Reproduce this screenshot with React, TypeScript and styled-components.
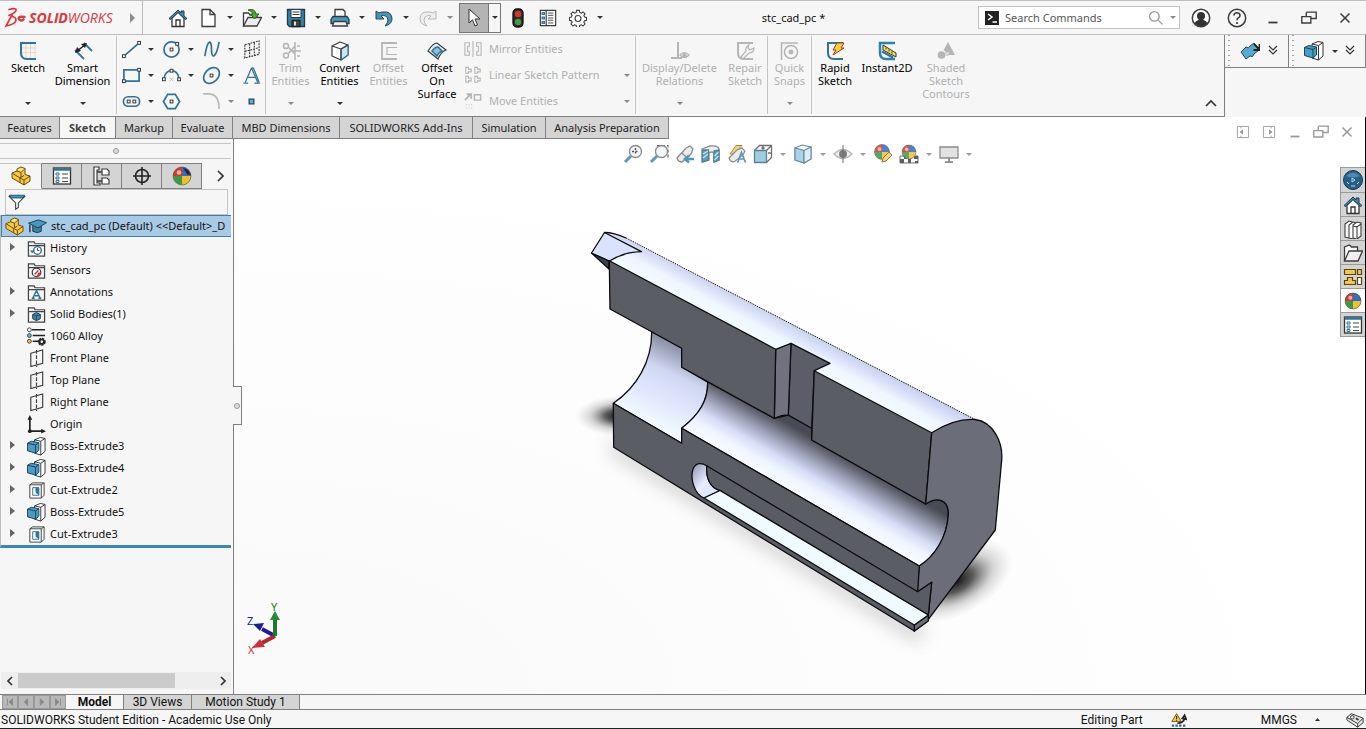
import React from "react";
import styled, { createGlobalStyle, css } from "styled-components";

const Global = createGlobalStyle`
  *, *::before, *::after { box-sizing: border-box; }
  html, body { margin: 0; padding: 0; }
  body { background: #f6f6f6; color: #111; font: 11px/16px "Noto Sans", "Open Sans", sans-serif; overflow: hidden; }
  button, input { font: inherit; color: inherit; margin: 0; }
  button { background: none; border: 0; padding: 0; }
  ul { list-style: none; margin: 0; padding: 0; }
  svg { display: block; flex: none; }
`;

/* ---------- icon primitives ---------- */

const Glyph = styled.svg.attrs({ viewBox: "0 0 20 20", "aria-hidden": true })<{ $size?: number }>`
  width: ${(p) => p.$size ?? 20}px;
  height: ${(p) => p.$size ?? 20}px;
  fill: none;
  stroke: #3c3c3c;
  stroke-width: 1.3;
`;

const BLUE = "#2f7396";
const PALE = "#b5b5b5";

const Node = ({ x, y, c = "#333" }: { x: number; y: number; c?: string }) => (
  <rect x={x - 1.5} y={y - 1.5} width="3" height="3" fill="#fff" stroke={c} strokeWidth="1" />
);

const CubeIcon = () => (
  <g strokeWidth="1" strokeLinejoin="round">
    <path d="M8 3l6-2.500 5 1v13.500l-4.500 4L8 17z" fill="#fff" stroke="#333" />
    <path d="M14.500 4.500l4.500-3M14.500 4.500V19M8 3l6.500 1.500" stroke="#333" />
    <path d="M.5 6.500l4-2 8 1.500v8L9 17 .5 14.500z" fill="#4a9cc4" stroke="#17455f" />
    <path d="M.5 6.500L9 8.500 12.500 6M9 8.500V17" stroke="#17455f" />
  </g>
);

const Folder = () => (
  <path d="M1.500 18v-15h6l1 2h10v13zM1.500 7h17" fill="#f4f4f4" stroke="#444" strokeWidth="1.300" />
);

const Ball = ({ cx = 10, cy = 10, r = 8 }: { cx?: number; cy?: number; r?: number }) => (
  <g stroke="none">
    <circle cx={cx} cy={cy} r={r} fill="#3c9a46" />
    <path d={`M${cx} ${cy}V${cy - r}A${r} ${r} 0 0 1 ${cx + r} ${cy}z`} fill="#2f6fc0" />
    <path d={`M${cx} ${cy}H${cx - r}A${r} ${r} 0 0 1 ${cx} ${cy - r}z`} fill="#d8372f" />
    <path d={`M${cx} ${cy}H${cx + r}A${r} ${r} 0 0 1 ${cx} ${cy + r}z`} fill="#f0c02c" />
    <circle cx={cx - r / 3} cy={cy - r / 2.5} r={r / 4} fill="#fff" opacity=".65" />
    <circle cx={cx} cy={cy} r={r} fill="none" stroke="#444" strokeOpacity=".6" strokeWidth=".8" />
  </g>
);

const Part = () => (
  <g stroke="#6b4b06" strokeWidth="1" strokeLinejoin="round">
    <path d="M1 7l5-2V3l4-2 4 1.500v6l5 1.500v5l-6 4L1 12z" fill="#f6c945" />
    <path d="M1 7l8 5v4.500M9 12l4-2.500M6 5l4 1.500 4-4M10 6.500v4.500M13 14v5M13 14l6-4M9 12l4 2" />
    <path d="M6.500 3.500L10 2l3 1-3 2.500z" fill="#fde592" stroke="none" />
  </g>
);

const House = () => (
  <g>
    <path d="M4 10v8.500h12V10l-6-6z" fill="#fff" stroke="#333" />
    <path d="M8 18v-6h4v6" stroke="#333" />
    <path d="M1 10.500L10 2l3 3V3h3v5l3 2.500-1.500 1L10 4.500l-7.500 7z" fill="#4189ab" stroke="#173f55" strokeWidth="1" />
  </g>
);

const ListBox = () => (
  <g>
    <rect x="1.500" y="2" width="17" height="16" fill="#fff" stroke="#333" />
    <path d="M1.500 3.500h17" stroke={BLUE} strokeWidth="2.500" />
    <path d="M10 8h6M10 12h6M10 15.500h6" stroke="#444" strokeWidth="1" />
    <path d="M4 7h3v2H4zM4 11h3v2H4zM4 14.500h3v2H4z" stroke={BLUE} strokeWidth="1" />
  </g>
);

const Magnifier = () => (
  <g>
    <path d="M8 12l-6 6" stroke="#4489a8" strokeWidth="3" />
    <circle cx="12.500" cy="7.500" r="6" fill="#f2f5f7" stroke="#777" />
  </g>
);

const SketchL = ({ c = BLUE }: { c?: string }) => (
  <path d="M18 2H3v10q0 6 6 6h9" stroke={c} strokeWidth="2" />
);

const icons = {
  home: <House />,
  page: <path d="M4 1.500h8l5 5v12H4zM12 1.500v5h5" fill="#fff" />,
  open: (
    <g>
      <path d="M1.500 18V5h5l1.500 2h7v3" fill="#fff" />
      <path d="M1.500 18L6 9.500h13.500L15 18z" fill="#eee" />
      <path d="M6 2q7-2 8 4h3l-4.500 5L8.500 6H11q-1-3-5-4z" fill="#4da52c" stroke="#28691a" strokeWidth="1" />
    </g>
  ),
  save: (
    <g>
      <path d="M1.500 1.500h17v17h-15l-2-2z" fill="#3a7fa2" stroke="#1f3c4c" />
      <path d="M5 1.500h10v8H5z" fill="#fff" stroke="#1f3c4c" strokeWidth="1" />
      <path d="M6.500 4h7M6.500 6.500h7" strokeWidth="1" />
      <path d="M6 12.500h8v6H6z" fill="#444" stroke="#222" />
      <path d="M8 13.500h2v4H8z" fill="#ddd" stroke="none" />
    </g>
  ),
  print: (
    <g>
      <path d="M5 9V1.500h8l2 2V9" fill="#fff" />
      <path d="M3 8.500h14l2 3v4H1v-4z" fill="#4b97bb" stroke="#1f3c4c" />
      <path d="M4 13.500h12l1.500 4.500h-15z" fill="#eee" />
    </g>
  ),
  undo: <path d="M2 3v8h8l-3-3q6-2 7 4 0 3-3 6 7-2 7-7 0-8-9-7-2 0-4 1z" fill="#4a94b8" stroke="#1d4a63" strokeWidth="1" />,
  redo: <path d="M18 3v8h-8l3-3q-6-2-7 4 0 3 3 6-7-2-7-7 0-8 9-7 2 0 4 1z" fill="#eee" stroke="#b8b8b8" strokeWidth="1" />,
  cursor: <path d="M5 1v14l3.500-3.200L11 18l2.500-1-2.500-6h5z" fill="#fff" stroke="#333" strokeWidth="1" />,
  light: (
    <g>
      <rect x="5" y="1" width="10" height="18" rx="4" fill="#2c2c2c" stroke="#111" />
      <circle cx="10" cy="6" r="3.200" fill="#d7362b" stroke="none" />
      <circle cx="10" cy="14" r="3.200" fill="#469a48" stroke="none" />
    </g>
  ),
  options: (
    <g>
      <path d="M1.500 1.500h17v17h-17zM8 1.500v17" fill="#fff" />
      <path d="M3.500 4h2.500v2H3.500zM3.500 9h2.500v2H3.500zM3.500 14h2.500v2H3.500z" stroke={BLUE} />
      <path d="M10 4.500h6M10 7h6M10 10h6M10 12.500h6M10 15.500h6" strokeWidth="1" />
    </g>
  ),
  gear: (
    <g strokeWidth="1.200">
      <path d="M8.500 1.500h3l.5 2.300 1.700.8 2-1.300 2.100 2.100-1.300 2 .8 1.600 2.200.5v3l-2.200.5-.8 1.700 1.300 2-2.100 2.100-2-1.300-1.700.8-.5 2.200h-3L8 18.300l-1.700-.8-2 1.300-2.100-2.100 1.300-2-.8-1.700L.5 12.500v-3L2.700 9l.8-1.600-1.300-2 2.100-2.100 2 1.300L8 3.800z" fill="#fff" />
      <circle cx="10" cy="10.500" r="3.300" />
    </g>
  ),
  user: (
    <g>
      <circle cx="10" cy="10" r="8.700" fill="#fff" strokeWidth="1.500" />
      <circle cx="10" cy="8" r="4" fill="#333" stroke="none" />
      <path d="M3.500 15.500q1-3 4-3.500l1-2h3l1 2q3 .5 4 3.500-6 5.500-13 0z" fill="#333" stroke="none" />
    </g>
  ),
  help: (
    <g>
      <circle cx="10" cy="10" r="8.700" strokeWidth="1.500" />
      <path d="M7 7.500q0-2.700 3-2.700t3 2.700q0 1.500-1.700 2.400-1.300.8-1.300 2.300" strokeWidth="1.600" />
      <circle cx="10" cy="15" r="1.100" fill="#333" stroke="none" />
    </g>
  ),
  minimize: <path d="M5 15h10" strokeWidth="2" />,
  restore: <path d="M7 3.500h11v7h-6M2 8.500h10v7H2zM7 3.500v5" strokeWidth="1.500" />,
  close: <path d="M5 5l10 10M15 5L5 15" strokeWidth="1.700" />,
  search: <path d="M13 13l5 5M14 8a6 6 0 1 1-12 0 6 6 0 0 1 12 0z" stroke="#999" strokeWidth="1.600" />,
  sketch: (
    <g>
      <path d="M8 3v14M12.500 3v14M17 3v14M4 7h14M4 11.500h14" stroke="#e0cdbd" strokeWidth=".7" />
      <SketchL />
    </g>
  ),
  smart: (
    <g>
      <path d="M2 9l9 9M11 2l8 8" stroke={BLUE} strokeWidth="1.800" />
      <path d="M3.500 10.500l9-7" stroke="#222" strokeWidth="1.500" />
      <path d="M2 12l2-6 4 4zM14 2l-6 1 4 4z" fill="#222" stroke="none" />
    </g>
  ),
  line: <g><path d="M2 17L18 3" stroke={BLUE} strokeWidth="1.800" /><Node x={2} y={17} /><Node x={18} y={3} /></g>,
  circle: <g><circle cx="10" cy="10" r="8" stroke={BLUE} strokeWidth="1.800" /><Node x={10} y={10} /><Node x={16} y={4} /></g>,
  spline: <path d="M3 17C6-2 10-1 10 10s5 9 8-8" stroke={BLUE} strokeWidth="1.800" />,
  plane: <path d="M3 5l15-4v14L3 19zM3 12l15-4M8 4v14M13 3v13" strokeDasharray="2 1" strokeWidth="1.200" />,
  rect: <g><path d="M2 4h16v12H2z" stroke={BLUE} strokeWidth="1.800" /><Node x={18} y={4} /><Node x={2} y={16} /></g>,
  arc: <g><path d="M2 14Q3 5 10 5t8 9" stroke={BLUE} strokeWidth="1.800" /><Node x={2} y={14} /><Node x={10} y={5} /><Node x={18} y={14} /><path d="M8 12l4 4M12 12l-4 4" stroke="#aaa" strokeWidth=".7" /></g>,
  ellipse: <g><ellipse cx="10" cy="10" rx="9.500" ry="7" transform="rotate(-45 10 10)" stroke={BLUE} strokeWidth="1.800" /><Node x={10} y={10} /></g>,
  text: <path d="M10 2L3.500 17M10 2l6.500 15M12 2L18 17M6 12h8M1.500 18h5M13 18h6M10 2h2" stroke={BLUE} />,
  slot: <g><rect x="1.500" y="5" width="17" height="10" rx="5" stroke={BLUE} strokeWidth="1.800" /><Node x={7} y={10} /><Node x={13} y={10} /></g>,
  polygon: <g><path d="M6 2.500h8l4.500 7.500-4.500 7.500H6L1.500 10z" stroke={BLUE} strokeWidth="1.800" /><Node x={10} y={10} /></g>,
  fillet: <path d="M1 2h6q11 0 11 16" stroke="#b9b9b9" strokeWidth="1.800" />,
  point: <rect x="7.500" y="7.500" width="5" height="5" fill="#5aafd8" stroke="#1d4a63" />,
  trim: (
    <g stroke={PALE} strokeWidth="1.500">
      <circle cx="5" cy="5" r="2.500" /><circle cx="5" cy="14.500" r="2.500" />
      <path d="M7 6l7 7M7 13l7-8M14 1v18M9 10h11M16 5h3M16 15h3" />
    </g>
  ),
  convert: (
    <g strokeWidth="1.200" strokeLinejoin="round">
      <path d="M2 5l8-4 8 3v10l-7 5-9-4z" fill="#fff" />
      <path d="M11 8l7-4v10l-7 5z" fill="#cfe3ee" stroke={BLUE} />
      <path d="M2 5l9 3v11M11 8l7-4" />
    </g>
  ),
  offset: <g stroke={PALE} strokeWidth="1.800"><path d="M18 2H3v16h15" /><path d="M18 6.500H8v7h10" strokeWidth="1.200" /></g>,
  surface: (
    <g strokeWidth="1.200">
      <path d="M1 10Q6 2 10 2l9 7q-5 2-8 9z" fill="#e2eef4" />
      <path d="M5 10q3-4 6-4l4 4q-3 1-5 5z" fill="#8fc0d8" stroke={BLUE} strokeWidth="1.500" />
    </g>
  ),
  mirror: <path d="M10 1v18M1 3h5v4H4v6h2v4H1zM19 3h-5v4h2v6h-2v4h5z" stroke={PALE} strokeWidth="1.200" />,
  pattern: (
    <path d="M2 1.500h3v2h3v3H5v1.500H2zM12 1.500h3v2h3v3h-3v1.500h-3zM2 11.500h3v2h3v3H5v1.500H2zM12 11.500h3v2h3v3h-3v1.500h-3z" stroke={PALE} strokeWidth="1.200" />
  ),
  move: <g stroke={PALE}><path d="M1 9l6-6M3 2.500h5v5" strokeWidth="2" /><path d="M11.500 3h7v6h-7z" strokeWidth="1.500" /><path d="M2 14h7M2 18h7" strokeDasharray="1 2" strokeWidth="1" /></g>,
  relations: <g stroke={PALE}><path d="M8 1v16M1 17h11" strokeWidth="2" /><path d="M10 14q4.500-5 9 0-4.500 5-9 0z" fill="#f6f6f6" strokeWidth="1.200" /><circle cx="14.500" cy="14" r="1.600" fill={PALE} /></g>,
  repair: <g stroke={PALE}><SketchL c={PALE} /><path d="M6 16l5-6q-1-4 3-6l-1 3 2 2 4-2q0 5-5 5l-6 6z" fill="#f6f6f6" strokeWidth="1.200" /></g>,
  snaps: <g stroke={PALE}><path d="M1.500 19V2H18" strokeWidth="1.500" /><circle cx="11" cy="11" r="6.500" strokeWidth="1.500" /><circle cx="11" cy="11" r="1.800" fill={PALE} /></g>,
  rapid: <g><SketchL /><path d="M12 2h7l-3 5h3L8 14l3-5H8z" fill="#f7d23e" stroke="#a63a1d" strokeWidth="1" /></g>,
  instant: (
    <g>
      <path d="M18 2H3v10q0 6 6 6h9" stroke="#2d80b0" strokeWidth="2.500" />
      <path d="M6 4l13 8v4L6 9z" fill="#f2e24a" stroke="#333" strokeWidth="1" />
      <path d="M9 6.500v2M12 8.500v2M15 10.500v2" strokeWidth="1" />
      <path d="M5 10.500l11 6" stroke={BLUE} strokeWidth="2" />
    </g>
  ),
  shaded: <g stroke="none" fill={PALE}><path d="M12 1l7 13H5z" /><circle cx="5.500" cy="14" r="4.500" stroke="#f6f6f6" /><path d="M9 11h4v4H9z" fill="#d4d4d4" /></g>,
  surfaceTool: (
    <g>
      <path d="M1 11l5-5q3 2 4-1l4-3 5 7-5 4q-1 4-4 2l-4 3z" fill="#56a9cf" stroke="#1d4a63" strokeWidth="1" />
      <path d="M14 3l5 5M19.500 3v6h-6" stroke="#222" strokeWidth="1.800" />
    </g>
  ),
  cube: <CubeIcon />,
  part: <Part />,
  list: <ListBox />,
  config: (
    <g>
      <path d="M2 1h5v3H5v13h3v2H2z" fill="#fff" strokeWidth="1.200" />
      <path d="M5 6h5M5 15h5" />
      <path d="M10 3h5l2 2v4h-7zM10 12h5l2 2v4h-7z" fill="#fff" strokeWidth="1.200" />
    </g>
  ),
  target: <g stroke="#222"><circle cx="10" cy="10" r="6.500" strokeWidth="1.600" /><path d="M10 1v18M1 10h18" strokeWidth="1.600" /></g>,
  ball: <Ball />,
  ballTab: <g><Ball r={9} /><path d="M11 2q6 1 7.500 7l-3-.5z" fill="#3a1c1c" stroke="none" /></g>,
  filter: (
    <g>
      <path d="M1.500 4l7 7v7l3-2v-5l7-7z" fill="#fff" strokeWidth="1.200" />
      <path d="M1.500 2.500h17l-2 3h-13z" fill="#4b97bb" stroke="#1d4a63" strokeWidth="1" />
    </g>
  ),
  cap: (
    <g stroke="#173f55" strokeWidth="1">
      <path d="M5 9v6q5 3 9 0V9" fill="#3c7fa1" />
      <path d="M.5 6.500L11 3l8.500 3-9 5.500z" fill="#4b97bb" />
      <path d="M2 8v8" stroke="#333" strokeWidth="1.500" />
    </g>
  ),
  history: <g><Folder /><circle cx="11" cy="12" r="4" fill="#fff" stroke={BLUE} strokeWidth="1.500" /><path d="M11 9.500V12h2" strokeWidth="1" /><path d="M3 12h5l-2.500 3z" fill={BLUE} stroke="none" /></g>,
  sensors: <g><Folder /><circle cx="10" cy="12" r="4.500" fill="#fff" /><path d="M10 16.500a4.500 4.500 0 0 0 4.500-4.500H12z" fill="#d33" stroke="none" /><path d="M8 14l4-4" stroke="#b22" /></g>,
  annotations: <g><Folder /><path d="M6 16l4-8 4 8M8 13.500h4M5 16h3M12 16h3" stroke={BLUE} strokeWidth="1.500" /></g>,
  bodies: <g><Folder /><path d="M6 10l4-2 4 2v4.500l-4 2-4-2z" fill="#3e86a8" stroke="#173f55" strokeWidth="1" /><path d="M6 10l4 1.500 4-1.500M10 11.500V16" stroke="#173f55" strokeWidth=".8" /></g>,
  material: (
    <g>
      <path d="M5 3h14M6 9h13M6 15h8" stroke="#222" strokeWidth="1.600" />
      <circle cx="2.500" cy="3" r="2" fill="#fff" strokeWidth="1" />
      <circle cx="2.500" cy="9" r="2" fill="#6cb8dd" strokeWidth="1" />
      <circle cx="2.500" cy="15" r="2" fill="#f0d030" strokeWidth="1" />
      <circle cx="15.500" cy="15.500" r="3" stroke="#222" strokeWidth="2.500" strokeDasharray="2.200 .6" />
      <circle cx="15.500" cy="15.500" r="2.200" stroke="#222" strokeWidth="1.500" />
    </g>
  ),
  refPlane: (
    <g strokeWidth="1.200">
      <path d="M4 4.500L16.500 1v14L4 18.500z" />
      <path d="M10 1v18" strokeDasharray="4 1.500" />
    </g>
  ),
  origin: <g stroke="#222" strokeWidth="1.800"><path d="M3 3v14h14" /><path d="M.5 5L3 0l2.500 5zM15 14.500l5 2.500-5 2.500z" fill="#222" stroke="none" /><circle cx="3" cy="17" r="2" fill="#222" stroke="none" /></g>,
  cut: (
    <g strokeWidth="1">
      <path d="M3 4l3-2h12v13l-3 3H3z" fill="#fff" />
      <path d="M3 4h12v14M15 4l3-2" />
      <path d="M6 7h6.500v8H6z" fill="#fff" stroke={BLUE} />
      <path d="M9 7h3.500v8L9 12z" fill={BLUE} stroke="none" />
    </g>
  ),
  zoomFit: <g><Magnifier /><path d="M12.500 4v7M9 7.500h7" strokeDasharray="2 1.500" strokeWidth="1.500" /></g>,
  zoomArea: <g><path d="M8 1.500h11v12" strokeDasharray="3 2" strokeWidth="1.100" /><Magnifier /></g>,
  prevView: <g><path d="M2 14l9-10 4-2 3 3-2 5-9 8q-4 0-5-4z" fill="#e9e9e9" stroke="#777" /><path d="M7 9l5 5" stroke="#777" /><path d="M19 15h-8M14 11.500L10 15l4 3.500" stroke="#2f86b0" strokeWidth="2.500" /></g>,
  section: (
    <g>
      <path d="M1 5l8-3q8-1 9 3v11l-5 2v-9q-3-2-5 0v7l-7 2z" fill="#ececec" stroke="#777" />
      <path d="M1.500 6h6v10l-6 2zM13 7l5-1v10l-5 2z" fill="#3a91b4" stroke="#2c6b86" />
      <path d="M2 10l5-3M2 14l5-4M13.500 12l4-4M13.500 16l4-4" stroke="#bfe0ee" />
    </g>
  ),
  annView: (
    <g>
      <path d="M3 10L9 1.500h6L7 10z" fill="#f4cc60" stroke="#a1701e" strokeWidth="1" />
      <path d="M2 14l8-8 5-2 3 3-2 4-9 7q-4 0-5-4z" fill="#e9e9e9" stroke="#777" strokeWidth="1.100" />
      <path d="M10.500 18.500l4-10 4 10M12 15h5" stroke="#3a86ab" strokeWidth="1.700" />
    </g>
  ),
  orient: (
    <g>
      <path d="M1.500 6.500l5-5h12v12l-5 5" fill="#fff" stroke="#555" />
      <path d="M1.500 6.500h12v12h-12z" fill="#8fc4de" stroke="#3b6f88" />
      <path d="M13.500 6.500l5-5M10 1v4M8.500 3.500L10 5l1.500-1.500M19 9h-4" stroke="#555" />
    </g>
  ),
  display: <g strokeWidth="1.100" stroke="#4a7a92"><path d="M2 4l7-3 9 2v12l-7 4-9-3z" fill="#f3f8fb" /><path d="M2 4l9 2.500V19l-9-3z" fill="#9dcbe2" /><path d="M11 6.500L18 3v12l-7 4z" fill="#d6eaf4" /></g>,
  eye: (
    <g>
      <path d="M1 10q9-9 18 0-9 9-18 0z" fill="#eee" stroke="#aaa" />
      <circle cx="10" cy="10" r="4" fill="#666" stroke="none" />
      <path d="M10 1v18" stroke="#555" strokeWidth="1" />
    </g>
  ),
  appearance: <g><Ball cx={9} cy={8} r={7.5} /><path d="M9 18l1-4 6-6 3 3-6 6z" fill="#f4cf58" stroke="#8a5a1c" strokeWidth="1" /></g>,
  scene: (
    <g>
      <path d="M1 12h18v7H1z" fill="#fff" stroke="#555" strokeWidth="1" />
      <path d="M1 15h4v4H1zM9 15h3v4H9zM15 12h4v3h-4zM16 17h3v2h-3zM5 12h3v3H5z" fill="#444" stroke="none" />
      <Ball cx={10} cy={8} r={7} />
    </g>
  ),
  monitor: <g stroke="#777"><path d="M1 3h18v11H1z" fill="#dedede" /><path d="M10 14v4M6 18.200h8" strokeWidth="1.800" /></g>,
  compass: (
    <g>
      <circle cx="10" cy="10" r="9.500" fill="#255f85" stroke="#123a55" strokeWidth="1" />
      <path d="M3 6q7-7 14 0-7 3-14 0z" fill="#5d9dc4" stroke="none" opacity=".7" />
      <path d="M9 8v4l3-2zM4 12l2 2M16 12l-2 2M8 16h4" stroke="#b7dcf0" strokeWidth="1" />
    </g>
  ),
  books: (
    <g fill="#fff" strokeWidth="1.100">
      <path d="M2 5l4-3 3 1v13l-3 3-4-1z" /><path d="M6 6l4-3 3 1v13l-3 3-4-1z" /><path d="M10 6l4-3 4 1v13l-4 3-4-1z" /><path d="M14 7v12M10 7l4 1 4-3" />
    </g>
  ),
  folder: <g fill="#fff"><path d="M1.500 18V4l5-2 2 2h6v4" /><path d="M1.500 18L6 8h13.500L15 18z" fill="#f0f0f0" /></g>,
  palette: (
    <g stroke="#5a4310" fill="#f2c94c" strokeWidth="1.200">
      <path d="M1.500 2.500h11v5h-11zM14.500 2.500h4v5h-4zM1.500 17.500v-4h3v-3h5v3h3v4z" /><path d="M14.500 10.500h4v7h-4z" fill="#fff" />
    </g>
  ),
  rebuild: (
    <g>
      <path d="M7 2l6 10H1z" fill="#f8c62e" stroke="#5a4300" strokeWidth="1" />
      <path d="M7 5v4M7 10v1" stroke="#222" />
      <path d="M8 14q8 0 9-7M14 8l3-4 2 5z" stroke="#222" strokeWidth="2" />
      <path d="M1 17h3M5.500 17h3M10 17h3M15 17h3" stroke={BLUE} strokeWidth="3" />
    </g>
  ),
  tag: (
    <g strokeWidth="1.100">
      <path d="M1 7l5-4 13 5v5l-6 5L1 10z" fill="#e6e6e6" /><path d="M1 7l12 7 6-6M13 14v4" /><circle cx="7" cy="7" r="2" /><path d="M11 8l3 2" strokeWidth="2" />
    </g>
  ),
  paneLeft: <g><path d="M2 2h16v16H2zM7 2v3M7 15v3" strokeWidth="1.300" /><path d="M10 6v8l-5-4z" fill="#999" stroke="none" /></g>,
  paneRight: <g><path d="M2 2h16v16H2zM13 2v3M13 15v3" strokeWidth="1.300" /><path d="M10 6v8l5-4z" fill="#999" stroke="none" /></g>,
};

type IconName = keyof typeof icons;

const Icon = ({ name, size }: { name: IconName; size?: number }) => <Glyph $size={size}>{icons[name]}</Glyph>;

const Caret = styled.span<{ $pale?: boolean }>`
  width: 0;
  height: 0;
  border: 3px solid transparent;
  border-top-color: ${(p) => (p.$pale ? "#8a8a8a" : "#333")};
  border-bottom: 0;
`;

/* ---------- shell ---------- */

const Window = styled.div`
  display: flex;
  flex-direction: column;
  height: 100vh;
  background: #f6f6f6;
  border-top: 1px solid #bdbdbd;
`;

/* ---------- title bar ---------- */

const TitleBar = styled.header`
  display: flex;
  align-items: center;
  flex: none;
  height: 34px;
  border-bottom: 1px solid #bcbcbc;
`;

const Brand = styled.div`
  display: flex;
  align-items: center;
  width: 143px;
  height: 100%;
  padding: 0 7px 0 4px;
  border-right: 1px solid #bcbcbc;
`;

const BrandName = styled.span`
  flex: 1;
  padding-left: 3px;
  font: italic 14px/20px "Open Sans", sans-serif;
  color: #d9363e;
  b { font-weight: 700; }
`;

const BrandArrow = styled.button`
  width: 0;
  height: 0;
  border: 5px solid transparent;
  border-left-color: #8c8c8c;
  border-right: 0;
`;

const QuickTools = styled.div`
  display: flex;
  align-items: center;
  gap: 4px;
  padding-left: 22px;
`;

const Run = styled.div`
  display: flex;
  align-items: center;
`;

const IconButton = styled.button<{ $width?: number }>`
  display: flex;
  align-items: center;
  justify-content: center;
  width: ${(p) => p.$width ?? 26}px;
  height: 26px;
`;

const SelectTool = styled.div`
  display: flex;
  width: 42px;
  height: 30px;
  border: 1px solid #777;
  button:first-child { width: 29px; height: 28px; background: #b4b4b4; border-right: 1px solid #777; }
  button:last-child { width: 11px; height: 28px; }
`;

const FileTitle = styled.h1`
  flex: 1;
  margin: 0;
  text-align: center;
  font-size: 11px;
  font-weight: 400;
`;

const SearchBox = styled.label`
  display: flex;
  align-items: center;
  width: 202px;
  height: 23px;
  margin-right: 3px;
  padding: 0 3px 0 6px;
  gap: 6px;
  background: #fff;
  border: 1px solid #c2c2c2;
  input { flex: 1; min-width: 0; border: 0; padding: 0; background: none; outline: 0; }
  input::placeholder { color: #555; opacity: 1; }
`;

const Prompt = styled.svg`
  width: 14px;
  height: 14px;
`;

const WindowControls = styled.div`
  display: flex;
  padding-right: 3px;
`;

/* ---------- ribbon ---------- */

const RibbonRow = styled.div`
  display: flex;
  align-items: flex-start;
  flex: none;
  height: 82px;
`;

const Ribbon = styled.div`
  display: flex;
  flex: 1;
  min-width: 0;
  height: 82px;
  padding-top: 1px;
  border-right: 1px solid #808080;
  border-bottom: 1px solid #808080;
`;

const Group = styled.div<{ $pad?: number }>`
  display: flex;
  height: 78px;
  padding-right: ${(p) => p.$pad ?? 0}px;
  border-right: 1px solid #c4c4c4;
  &:last-of-type { border-right: 0; }
`;

const Command = styled.button<{ $width: number }>`
  display: flex;
  flex-direction: column;
  align-items: center;
  width: ${(p) => p.$width}px;
  height: 69px;
  padding-top: 5px;
  line-height: 13px;
  white-space: nowrap;
  color: #000;
  &:disabled { color: #b0b0b0; }
`;

const CommandLabel = styled.span`
  flex: 1;
`;

const SketchGrid = styled.div`
  display: grid;
  grid-template-columns: 28px 12px 28px 12px 28px 12px 28px;
  grid-template-rows: repeat(3, 26px);
  align-items: center;
  justify-items: center;
`;

const SideList = styled.div`
  display: grid;
  grid-template-rows: repeat(3, 26px);
  width: 174px;
`;

const SideCommand = styled.button`
  display: flex;
  align-items: center;
  gap: 7px;
  padding: 0 5px 0 3px;
  text-align: left;
  &:disabled { color: #b0b0b0; }
  span:first-of-type { flex: 1; }
`;

const Collapse = styled.button`
  display: flex;
  align-items: flex-end;
  margin-left: auto;
  padding: 0 7px 7px;
`;

const MiniBars = styled.div`
  display: flex;
  width: 141px;
  height: 33px;
  border-bottom: 1px solid #808080;
`;

const MiniBar = styled.div<{ $grow: number; $gap: number }>`
  display: flex;
  align-items: center;
  flex: ${(p) => p.$grow} 0 0;
  padding-left: 12px;
  gap: ${(p) => p.$gap}px;
  border-right: 1px solid #808080;
  background: radial-gradient(circle, #a0a0a0 1px, transparent 1px) 2px 3px / 4px 5px repeat-y;
`;

/* ---------- ribbon tabs ---------- */

const TabRow = styled.div`
  display: flex;
  flex: none;
  height: 22px;
  background: #fff;
  border-right: 1px solid #000;
`;

const RibbonTab = styled.button<{ $width: number; $active?: boolean }>`
  width: ${(p) => p.$width}px;
  white-space: nowrap;
  line-height: 20px;
  color: #222;
  background: #d4d4d4;
  border-right: 1px solid #808080;
  border-bottom: 1px solid #808080;
  ${(p) => p.$active && css`
    background: #f6f6f6;
    font-weight: 700;
    color: #444;
  `}
`;

const DocControls = styled.div`
  position: relative;
  z-index: 1;
  display: flex;
  height: 28px;
  margin-left: auto;
  padding: 2px 5px 0 0;
  svg { stroke: #999; }
`;

/* ---------- body ---------- */

const Body = styled.main`
  display: flex;
  flex: 1;
  min-height: 0;
`;

const SidePanel = styled.aside`
  position: relative;
  display: flex;
  flex-direction: column;
  flex: none;
  width: 234px;
  padding-right: 2px;
  border-right: 1px solid #808080;
`;

const Splitter = styled.div`
  display: flex;
  align-items: center;
  justify-content: center;
  height: 16px;
  margin: 4px 0;
  border-top: 1px solid #c4c4c4;
  border-bottom: 1px solid #c4c4c4;
`;

const Grip = styled.span`
  width: 6px;
  height: 6px;
  border: 1px solid #999;
  border-radius: 50%;
  background: #ddd;
`;

const PanelTabs = styled.div`
  display: flex;
  height: 26px;
`;

const PanelTab = styled.button<{ $active?: boolean }>`
  display: flex;
  align-items: center;
  justify-content: center;
  width: ${(p) => (p.$active ? 42 : 40)}px;
  background: ${(p) => (p.$active ? "#f6f6f6" : "#d4d4d4")};
  border: 1px solid #808080;
  border-left: 0;
  ${(p) => p.$active && css`border-bottom-color: #f6f6f6; border-top-color: #c4c4c4;`}
`;

const PanelMore = styled.button`
  display: flex;
  align-items: center;
  justify-content: center;
  flex: 1;
  padding-left: 7px;
`;

const FilterBox = styled.label`
  display: flex;
  align-items: center;
  height: 26px;
  margin: 0 3px 0 5px;
  padding-left: 2px;
  border: 1px solid #c4c4c4;
  input { flex: 1; min-width: 0; border: 0; background: none; outline: 0; }
`;

const Tree = styled.ul`
  border-left: 1px solid #bbb;
  border-bottom: 3px solid #3a86b4;
`;

const RootRow = styled.li`
  display: flex;
  align-items: center;
  height: 22px;
  gap: 4px;
  padding-left: 3px;
  overflow: hidden;
  white-space: nowrap;
  background: #a9cae4;
  border: 1px solid #3f7fb0;
  border-right: 0;
`;

const TreeRow = styled.li`
  display: flex;
  align-items: center;
  height: 22px;
`;

const Expander = styled.span<{ $shown: boolean }>`
  width: 0;
  height: 0;
  margin: 0 12px 2px 9px;
  border: 4px solid transparent;
  border-left: 5px solid ${(p) => (p.$shown ? "#666" : "transparent")};
  border-right: 0;
`;

const TreeLabel = styled.span`
  padding-left: 4px;
`;

const ScrollBar = styled.div`
  display: flex;
  align-items: center;
  height: 17px;
  margin: auto 0 5px 1px;
  background: #eee;
  button { width: 17px; display: flex; justify-content: center; }
`;

const ScrollThumb = styled.div`
  width: 157px;
  height: 15px;
  margin-right: auto;
  background: #cbcbcb;
`;

const PanelHandle = styled.button`
  position: absolute;
  left: 233px;
  top: 247px;
  z-index: 1;
  display: flex;
  align-items: center;
  justify-content: center;
  width: 9px;
  height: 39px;
  background: #f6f6f6;
  border: 1px solid #808080;
  border-left: 0;
`;

const Viewport = styled.section`
  position: relative;
  flex: 1;
  min-width: 0;
  background: #fff;
  border-right: 1px solid #000;
`;

const Scene = styled.svg`
  position: absolute;
  inset: 0;
  width: 100%;
  height: 100%;
`;

const HeadsUp = styled.div`
  position: absolute;
  top: 2px;
  left: 386px;
  display: flex;
  align-items: center;
  opacity: .85;
`;

const HudCaret = styled.span`
  display: flex;
  justify-content: center;
  width: 14px;
`;

const TaskPane = styled.nav`
  position: absolute;
  top: 28px;
  right: 0;
  display: flex;
  flex-direction: column;
  width: 25px;
  border: 1px solid #9a9a9a;
  border-right: 0;
`;

const TaskTab = styled.button<{ $active?: boolean }>`
  display: flex;
  align-items: center;
  justify-content: center;
  height: 24px;
  background: ${(p) => (p.$active ? "#fff" : "#d4d4d4")};
  & + & { border-top: 1px solid #9a9a9a; }
`;

/* ---------- bottom ---------- */

const BottomRow = styled.div`
  display: flex;
  flex: none;
  height: 16px;
  padding-left: 2px;
  font: 12px/16px Roboto, sans-serif;
  border-top: 1px solid #808080;
  border-bottom: 1px solid #808080;
`;

const Pager = styled.button`
  display: flex;
  align-items: center;
  justify-content: center;
  width: 16px;
  background: #b8b8b8;
  border: 1px solid #999;
`;

const BottomTab = styled.button<{ $width: number; $active?: boolean }>`
  width: ${(p) => p.$width}px;
  line-height: 12px;
  white-space: nowrap;
  background: ${(p) => (p.$active ? "#f6f6f6" : "#d4d4d4")};
  font-weight: ${(p) => (p.$active ? 700 : 400)};
  border-right: 1px solid #808080;
`;

const StatusBar = styled.footer`
  display: flex;
  align-items: center;
  flex: none;
  height: 19px;
  padding: 1px 2px 0 1px;
  font: 12px/16px Roboto, sans-serif;
  border-bottom: 1px solid #1c2428;
`;

const StatusNote = styled.span`
  flex: 1;
`;

const StatusUnits = styled.button`
  display: flex;
  align-items: center;
  gap: 18px;
  margin: 0 26px 0 74px;
  svg { width: 5px; height: 3px; }
`;

const StatusIcon = styled.span`
  margin-left: 28px;
`;

/* ---------- drawings ---------- */

const DsLogo = () => (
  <svg width="22" height="22" viewBox="0 0 22 22" fill="none" stroke="#d9363e" strokeWidth="1.700" strokeLinecap="round">
    <path d="M5 2.500q8-2 7 1-1 2.500-7 5" />
    <path d="M8 8L2 19q10-2 10-6 0-3-5-4" />
    <path d="M20.500 9q-6-1-6 1.500 0 1 2.500 2 2 0 2.500-1 2.500-5 2" transform="translate(0 1)" strokeWidth="2.300" />
  </svg>
);

const Chevron = ({ d }: { d: string }) => (
  <svg width="12" height="12" viewBox="0 0 12 12" fill="none" stroke="#333" strokeWidth="1.700"><path d={d} /></svg>
);

const DoubleChevron = () => (
  <svg width="14" height="14" viewBox="0 0 14 14" fill="none" stroke="#333" strokeWidth="1.200">
    <path d="M3 2l4 4 4-4M3 6l4 4 4-4" />
  </svg>
);

const Model = () => (
  <Scene viewBox="234 139 1131 555" preserveAspectRatio="xMidYMid slice" role="img" aria-label="Sectioned part">
    <defs>
      <linearGradient id="top" gradientUnits="userSpaceOnUse" x1="775" y1="349" x2="790" y2="321">
        <stop offset="0" stopColor="#f2fcff" /><stop offset=".4" stopColor="#eef6ff" />
        <stop offset=".75" stopColor="#d6ddf8" /><stop offset="1" stopColor="#c8cfea" />
      </linearGradient>
      <linearGradient id="bore" gradientUnits="userSpaceOnUse" x1="800" y1="497" x2="829" y2="447">
        <stop offset="0" stopColor="#f6fcff" /><stop offset=".22" stopColor="#f0f6ff" />
        <stop offset=".42" stopColor="#d6ddf6" /><stop offset=".68" stopColor="#9a9fb5" />
        <stop offset=".88" stopColor="#646875" /><stop offset="1" stopColor="#484b54" />
      </linearGradient>
      <linearGradient id="throat" gradientUnits="userSpaceOnUse" x1="645" y1="422" x2="682" y2="346">
        <stop offset="0" stopColor="#f2faff" /><stop offset=".3" stopColor="#e2e9fe" />
        <stop offset=".65" stopColor="#d0d7f2" /><stop offset="1" stopColor="#858a9e" />
      </linearGradient>
      <linearGradient id="slot" gradientUnits="userSpaceOnUse" x1="692" y1="470" x2="718" y2="492">
        <stop offset="0" stopColor="#9ca3bd" /><stop offset=".5" stopColor="#e6edff" /><stop offset="1" stopColor="#dce4f6" />
      </linearGradient>
      <radialGradient id="haze" cx="0" cy="1" r="1">
        <stop offset="0" stopColor="#f9f9f9" /><stop offset="1" stopColor="#fff" />
      </radialGradient>
      <radialGradient id="shade">
        <stop offset="0" stopColor="#111" /><stop offset=".3" stopColor="#333" stopOpacity=".8" />
        <stop offset=".65" stopColor="#777" stopOpacity=".3" /><stop offset="1" stopColor="#aaa" stopOpacity="0" />
      </radialGradient>
      <filter id="soft" x="-50%" y="-50%" width="200%" height="200%"><feGaussianBlur stdDeviation="9" /></filter>
    </defs>
    <rect x="234" y="139" width="1131" height="555" fill="url(#haze)" />
    <path d="M613 440l300 185 14 4-10 12L610 452z" fill="#777" opacity=".4" filter="url(#soft)" />
    <ellipse cx="618" cy="416" rx="42" ry="20" fill="url(#shade)" />
    <ellipse cx="956" cy="581" rx="62" ry="34" transform="rotate(-28 956 581)" fill="url(#shade)" />
    <g stroke="#0c0c10" strokeWidth="1.300" strokeLinejoin="round">
      <path d="M591.500 253L609 269v-8z" fill="#3f424a" />
      <path d="M604.500 232.500Q612 232 624 237.500L975 419.500Q950 420 932 432.500L814.300 370.700 830 363.300 791 343.300 775.700 349.300 609.300 260.700z" fill="url(#top)" stroke="none" />
      <path d="M604.500 232.500L591.500 253l18 8Q624 252 641.500 251.700z" fill="#dbe2fb" />
      <path d="M604.500 232.500Q614 232.500 626 238" fill="none" />
      <path d="M626 238L975 419.500" fill="none" strokeWidth="1" strokeDasharray="1.500 1" />
      <path d="M651.700 331.700C652 362 636 388 613.300 403.300L681.700 443.300V428.300C700 414 708 400 707.700 382.300L681.700 367V348z" fill="url(#throat)" />
      <path d="M707.700 382C708 400 700 414 681.700 428.300L919.300 566C935 556 947 537 948.300 515 949 500 938 496 925.700 504L811.700 440V428L788 415 774.300 418.300z" fill="url(#bore)" />
      <path d="M791 343.300L830 363.300 814.300 370.700 811.700 428.300 788.300 415z" fill="#5b5e66" />
      <path d="M775.700 349.300L791 343.300 788.300 415Q782 415 774.300 418.300z" fill="#70737d" />
      <path d="M609.300 260.700L775.700 349.300 774.300 418.300 681.700 367.300V348.300L610 309z" fill="#5a5d64" />
      <path d="M814.300 370.700L931.700 432.700 925.700 504 811.700 440z" fill="#5a5d64" />
      <path d="M931.700 432.700C950 421 964 419 975 419.500 994 422 1003 443 1001.700 460L995.300 530 926.700 621.700 914.300 631 917 590 919.300 566C935 556 947 537 948.300 515 949 500 938 496 925.700 504z" fill="#6b6e79" />
      <path d="M613.300 403.300L681.700 443.300V428.300L919.300 566 917.700 591.700 931.700 582.300 928.300 615 914.300 631 613.700 447.300z" fill="#5a5d64" />
      <path d="M914.300 625L928.300 615V621L914.300 631z" fill="#6b6e79" />
      <path d="M704 498C694 494 690 478 693 469 696 462 702 463 706.700 465.700 706 478 710 488 720 490.500z" fill="url(#slot)" />
      <path d="M706.700 465.700L917.700 591.700 931.700 582.300 928.300 615 720 490.500C710 488 706 478 706.700 465.700z" fill="#595c63" />
      <path d="M720 490.500L928.300 615 914.300 625 704 498z" fill="#f0fbff" />
    </g>
    <g strokeWidth="4" fill="none">
      <path d="M275 636l-13-7" stroke="#1d1d9c" /><path d="M275 636l-13 7" stroke="#b3262c" /><path d="M275 636v-17" stroke="#1d7a2a" />
      <path d="M253 624l11-1-4 8z" fill="#1d1d9c" stroke="none" />
      <path d="M252 648l8-9 5 8z" fill="#c9303a" stroke="none" />
      <path d="M275 611l5 9h-10z" fill="#258a33" stroke="none" />
    </g>
    <g fontFamily="Noto Sans, sans-serif" fontSize="11">
      <text x="271" y="611" fill="#1d7a2a">Y</text><text x="247" y="625" fill="#1d1db0">Z</text><text x="248" y="654" fill="#c9303a">X</text>
    </g>
  </Scene>
);

/* ---------- data ---------- */

const fileTools: [IconName, string][] = [["page", "New"], ["open", "Open"], ["save", "Save"], ["print", "Print"], ["undo", "Undo"], ["redo", "Redo"]];

const sketchTools: [IconName, boolean][] = [
  ["line", true], ["circle", true], ["spline", true], ["plane", false],
  ["rect", true], ["arc", true], ["ellipse", true], ["text", false],
  ["slot", true], ["polygon", false], ["fillet", true], ["point", false],
];

type CommandDef = { icon: IconName; lines: string[]; width: number; off?: boolean; drop?: boolean };

const setup: CommandDef[] = [
  { icon: "sketch", lines: ["Sketch"], width: 56, drop: true },
  { icon: "smart", lines: ["Smart", "Dimension"], width: 53, drop: true },
];
const edit: CommandDef[] = [
  { icon: "trim", lines: ["Trim", "Entities"], width: 49, off: true, drop: true },
  { icon: "convert", lines: ["Convert", "Entities"], width: 49, drop: true },
  { icon: "offset", lines: ["Offset", "Entities"], width: 49, off: true },
  { icon: "surface", lines: ["Offset", "On", "Surface"], width: 48 },
];
const relate: CommandDef[] = [
  { icon: "relations", lines: ["Display/Delete", "Relations"], width: 87, off: true, drop: true },
  { icon: "repair", lines: ["Repair", "Sketch"], width: 44, off: true },
];
const snap: CommandDef[] = [{ icon: "snaps", lines: ["Quick", "Snaps"], width: 43, off: true, drop: true }];
const rapid: CommandDef[] = [
  { icon: "rapid", lines: ["Rapid", "Sketch"], width: 46 },
  { icon: "instant", lines: ["Instant2D"], width: 58 },
  { icon: "shaded", lines: ["Shaded", "Sketch", "Contours"], width: 60, off: true },
];

const Commands = ({ items }: { items: CommandDef[] }) => (
  <>
    {items.map((c) => (
      <Command key={c.icon} $width={c.width} disabled={c.off}>
        <Icon name={c.icon} />
        <CommandLabel>
          {c.lines.map((l) => <React.Fragment key={l}>{l}<br /></React.Fragment>)}
        </CommandLabel>
        {c.drop && <Caret $pale={c.off} />}
      </Command>
    ))}
  </>
);

const ribbonTabs: [string, number][] = [
  ["Features", 60], ["Sketch", 56], ["Markup", 57], ["Evaluate", 60], ["MBD Dimensions", 107],
  ["SOLIDWORKS Add-Ins", 133], ["Simulation", 73], ["Analysis Preparation", 123],
];

const features: [IconName, string, boolean][] = [
  ["history", "History", true], ["sensors", "Sensors", false], ["annotations", "Annotations", true],
  ["bodies", "Solid Bodies(1)", true], ["material", "1060 Alloy", false], ["refPlane", "Front Plane", false],
  ["refPlane", "Top Plane", false], ["refPlane", "Right Plane", false], ["origin", "Origin", false],
  ["cube", "Boss-Extrude3", true], ["cube", "Boss-Extrude4", true], ["cut", "Cut-Extrude2", true],
  ["cube", "Boss-Extrude5", true], ["cut", "Cut-Extrude3", true],
];

const hud: [IconName, boolean][] = [
  ["zoomFit", false], ["zoomArea", false], ["prevView", false], ["section", false], ["annView", false],
  ["orient", true], ["display", true], ["eye", true], ["appearance", false], ["scene", true], ["monitor", true],
];

const taskTabs: IconName[] = ["compass", "home", "books", "folder", "palette", "ball", "list"];

export default function App() {
  return (
    <Window>
      <Global />
      <TitleBar>
        <Brand>
          <DsLogo />
          <BrandName><b>SOLID</b>WORKS</BrandName>
          <BrandArrow aria-label="Show menu" />
        </Brand>
        <QuickTools>
          <IconButton aria-label="Home"><Icon name="home" /></IconButton>
          <Run>
            {fileTools.map(([icon, label]) => (
              <React.Fragment key={icon}>
                <IconButton aria-label={label}><Icon name={icon} /></IconButton>
                <IconButton $width={18} aria-label={`${label} options`}><Caret $pale={icon === "redo"} /></IconButton>
              </React.Fragment>
            ))}
            <SelectTool>
              <IconButton aria-label="Select"><Icon name="cursor" /></IconButton>
              <IconButton aria-label="Select options"><Caret /></IconButton>
            </SelectTool>
          </Run>
          <IconButton aria-label="Rebuild"><Icon name="light" /></IconButton>
          <IconButton aria-label="File properties"><Icon name="options" size={18} /></IconButton>
          <Run>
            <IconButton aria-label="Options"><Icon name="gear" size={18} /></IconButton>
            <IconButton $width={18} aria-label="More options"><Caret /></IconButton>
          </Run>
        </QuickTools>
        <FileTitle>stc_cad_pc *</FileTitle>
        <SearchBox>
          <Prompt viewBox="0 0 14 14" fill="none" stroke="#fff" strokeWidth="1.500">
            <path d="M0 0h14v14H0z" fill="#222" stroke="none" /><path d="M3 3l4 3-4 3M7.500 11H12" />
          </Prompt>
          <input type="text" placeholder="Search Commands" aria-label="Search Commands" />
          <Icon name="search" size={16} />
          <Caret $pale />
        </SearchBox>
        <WindowControls>
          {(["user", "help", "minimize", "restore", "close"] as IconName[]).map((n) => (
            <IconButton key={n} $width={36} aria-label={n}><Icon name={n} size={n === "user" || n === "help" ? 20 : 18} /></IconButton>
          ))}
        </WindowControls>
      </TitleBar>

      <RibbonRow>
        <Ribbon>
          <Group $pad={7}><Commands items={setup} /></Group>
          <Group>
            <SketchGrid>
              {sketchTools.map(([icon, drop], i) => (
                <React.Fragment key={icon}>
                  <IconButton aria-label={icon}><Icon name={icon} size={19} /></IconButton>
                  {i % 4 < 3 && (drop ? <Caret $pale={icon === "fillet"} /> : <span />)}
                </React.Fragment>
              ))}
            </SketchGrid>
          </Group>
          <Group>
            <Commands items={edit} />
            <SideList>
              <SideCommand disabled><Icon name="mirror" size={18} /><span>Mirror Entities</span></SideCommand>
              <SideCommand disabled><Icon name="pattern" size={18} /><span>Linear Sketch Pattern</span><Caret $pale /></SideCommand>
              <SideCommand disabled><Icon name="move" size={18} /><span>Move Entities</span><Caret $pale /></SideCommand>
            </SideList>
          </Group>
          <Group><Commands items={relate} /></Group>
          <Group><Commands items={snap} /></Group>
          <Group><Commands items={rapid} /></Group>
          <Collapse aria-label="Collapse ribbon"><Chevron d="M1 9l5-5 5 5" /></Collapse>
        </Ribbon>
        <MiniBars>
          <MiniBar $grow={63} $gap={3}>
            <IconButton aria-label="Surfaces"><Icon name="surfaceTool" /></IconButton><DoubleChevron />
          </MiniBar>
          <MiniBar $grow={78} $gap={5}>
            <IconButton aria-label="Extrude"><Icon name="cube" /></IconButton><Caret /><DoubleChevron />
          </MiniBar>
        </MiniBars>
      </RibbonRow>

      <TabRow>
        {ribbonTabs.map(([label, width]) => (
          <RibbonTab key={label} $width={width} $active={label === "Sketch"}>{label}</RibbonTab>
        ))}
        <DocControls>
          {(["paneLeft", "paneRight", "minimize", "restore", "close"] as IconName[]).map((n, i) => (
            <IconButton key={n} aria-label={`Document ${n}`}><Icon name={n} size={i < 2 ? 14 : 18} /></IconButton>
          ))}
        </DocControls>
      </TabRow>

      <Body>
        <SidePanel>
          <Splitter><Grip /></Splitter>
          <PanelTabs>
            {(["part", "list", "config", "target", "ballTab"] as IconName[]).map((n, i) => (
              <PanelTab key={n} $active={i === 0} aria-label={n}><Icon name={n} /></PanelTab>
            ))}
            <PanelMore aria-label="More tabs"><Chevron d="M4 1l5 5-5 5" /></PanelMore>
          </PanelTabs>
          <FilterBox><Icon name="filter" size={18} /><input type="text" aria-label="Filter tree" /></FilterBox>
          <Tree>
            <RootRow><Icon name="part" size={19} /><Icon name="cap" size={19} /><span>stc_cad_pc (Default) &lt;&lt;Default&gt;_D</span></RootRow>
            {features.map(([icon, label, expands]) => (
              <TreeRow key={label}>
                <Expander $shown={expands} /><Icon name={icon} size={19} /><TreeLabel>{label}</TreeLabel>
              </TreeRow>
            ))}
          </Tree>
          <ScrollBar>
            <button aria-label="Scroll left"><Chevron d="M8 2L4 6l4 4" /></button>
            <ScrollThumb />
            <button aria-label="Scroll right"><Chevron d="M4 2l4 4-4 4" /></button>
          </ScrollBar>
          <PanelHandle aria-label="Collapse panel"><Grip /></PanelHandle>
        </SidePanel>

        <Viewport>
          <Model />
          <HeadsUp>
            {hud.map(([icon, drop]) => (
              <React.Fragment key={icon}>
                <IconButton aria-label={icon}><Icon name={icon} /></IconButton>
                {drop && <HudCaret><Caret $pale /></HudCaret>}
              </React.Fragment>
            ))}
          </HeadsUp>
          <TaskPane>
            {taskTabs.map((n) => (
              <TaskTab key={n} $active={n === "ball"} aria-label={n}><Icon name={n} /></TaskTab>
            ))}
          </TaskPane>
        </Viewport>
      </Body>

      <BottomRow>
        {["M3 2v8M9 2L5 6l4 4z", "M8 2L4 6l4 4z", "M4 2l4 4-4 4z", "M3 2l4 4-4 4zM9 2v8"].map((d) => (
          <Pager key={d} aria-label="Scroll tabs">
            <svg width="10" height="10" viewBox="0 0 12 12" fill="#888" stroke="#888"><path d={d} /></svg>
          </Pager>
        ))}
        <BottomTab $width={58} $active>Model</BottomTab>
        <BottomTab $width={68}>3D Views</BottomTab>
        <BottomTab $width={108}>Motion Study 1</BottomTab>
      </BottomRow>
      <StatusBar>
        <StatusNote>SOLIDWORKS Student Edition - Academic Use Only</StatusNote>
        <span>Editing Part</span>
        <StatusIcon><Icon name="rebuild" size={16} /></StatusIcon>
        <StatusUnits>MMGS<svg viewBox="0 0 7 4"><path d="M0 4l3.500-4L7 4z" fill="#333" /></svg></StatusUnits>
        <Icon name="tag" size={18} />
      </StatusBar>
    </Window>
  );
}
